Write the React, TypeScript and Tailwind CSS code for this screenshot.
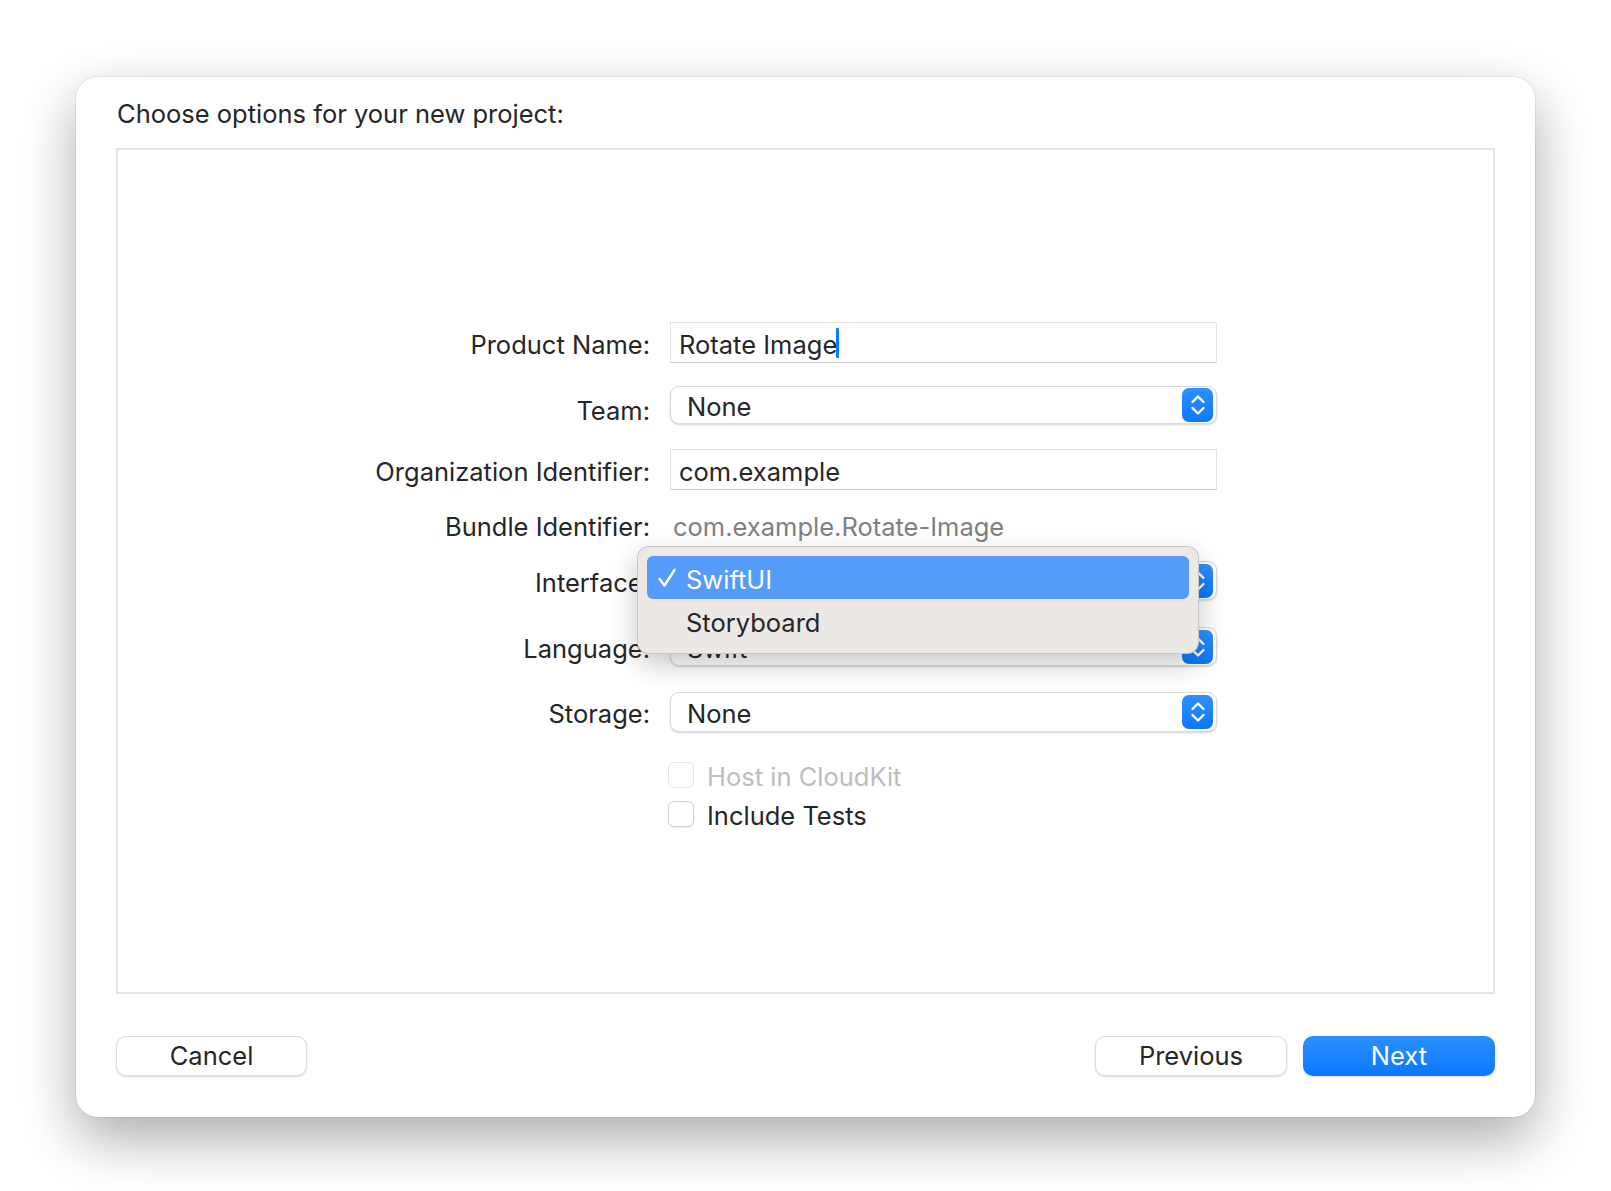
import React from "react";

const font = "font-['Inter','Noto_Sans',sans-serif]";
const nudge = "pt-[4px]";

function Stepper() {
  return (
    <div className="flex h-[34px] w-[31px] items-center justify-center rounded-[7px] bg-linear-to-b from-[#2e91fe] to-[#0a78fe]">
      <svg width="16" height="24" viewBox="0 0 16 24" fill="none" stroke="white" strokeWidth="2.4" strokeLinecap="round" strokeLinejoin="round">
        <path d="M2.5 9 L8 3.5 L13.5 9" />
        <path d="M2.5 15 L8 20.5 L13.5 15" />
      </svg>
    </div>
  );
}

function Popup({ value }: { value: string }) {
  return (
    <div className="flex h-full w-[547px] items-center justify-between rounded-[9px] border border-[#dadada] bg-white pl-[16px] pr-[3px] shadow-[0_1px_2px_rgba(0,0,0,0.18)]">
      <span className={nudge}>{value}</span>
      <Stepper />
    </div>
  );
}

function Field({ children }: { children: React.ReactNode }) {
  return (
    <div className="flex h-full w-[547px] items-center border border-[#e3e3e3] border-b-[#c9c9c9] bg-white pl-[8px]">
      {children}
    </div>
  );
}

function Row({ label, className, labelClass, children }: { label: string; className: string; labelClass?: string; children: React.ReactNode }) {
  return (
    <div className={`flex ${className}`}>
      <div className={`flex w-[532px] items-center justify-end ${labelClass ?? nudge}`}>{label}</div>
      <div className="relative ml-[20px] h-full">{children}</div>
    </div>
  );
}

function Checkbox({ label, disabled }: { label: string; disabled?: boolean }) {
  return (
    <div className="flex h-[26px] items-center">
      <div
        className={`h-[26px] w-[26px] rounded-[6px] border bg-white ${
          disabled ? "border-[#e6e6e6]" : "border-[#cfcfcf] shadow-[0_1px_1px_rgba(0,0,0,0.08)]"
        }`}
      />
      <span className={`ml-[13px] ${nudge} ${disabled ? "text-[#bdbdbd]" : "text-[#262626]"}`}>{label}</span>
    </div>
  );
}

function MenuCheck() {
  return (
    <svg width="20" height="20" viewBox="0 0 20 20" fill="none" stroke="white" strokeWidth="2.4" strokeLinecap="round" strokeLinejoin="round">
      <path d="M2.5 11 L7.5 17.5 L17.5 2" />
    </svg>
  );
}

export default function App() {
  return (
    <div className={`flex min-h-[1191px] w-full justify-center bg-white pt-[77px] ${font} text-[25.5px] leading-[32px] text-[#262626]`}>
      <div className="flex h-[1040px] w-[1459px] flex-col rounded-[22px] bg-white px-[40px] pt-[21px] shadow-[0_22px_55px_rgba(0,0,0,0.33),0_0_0_1px_rgba(0,0,0,0.06)]">
        <h1 className="ml-[1px]">Choose options for your new project:</h1>

        <div className="mt-[18px] h-[846px] w-full border-2 border-[#e4e4e4] pt-[172px]">
          <Row label="Product Name:" className="h-[41px]">
            <Field>
              <span className={nudge}>Rotate Image</span>
              <span className="ml-[-1px] h-[30px] w-[3px] rounded-[1px] bg-[#0a7aff]" />
            </Field>
          </Row>

          <Row label="Team:" className="mt-[23px] h-[38px]" labelClass="pt-[12px]">
            <Popup value="None" />
          </Row>

          <Row label="Organization Identifier:" className="mt-[25px] h-[41px]">
            <Field>
              <span className={nudge}>com.example</span>
            </Field>
          </Row>

          <Row label="Bundle Identifier:" className="mt-[20px] h-[30px]">
            <div className={`flex h-full items-center pl-[3px] text-[#808080] ${nudge}`}>com.example.Rotate-Image</div>
          </Row>

          <Row label="Interface:" className="mt-[21px] h-[39px]">
            <Popup value="SwiftUI" />
            <div className="absolute left-[-33px] top-[-15px] z-10 flex h-[108px] w-[562px] flex-col rounded-[12px] border border-black/15 bg-[#ece8e5] px-[9px] pt-[9px] shadow-[0_10px_28px_rgba(0,0,0,0.22)]">
              <div className="flex h-[43px] items-center rounded-[6px] bg-[#559cfa] pl-[10px] text-white">
                <MenuCheck />
                <span className={`ml-[9px] ${nudge}`}>SwiftUI</span>
              </div>
              <div className={`flex h-[44px] items-center pl-[39px] text-[#262626] ${nudge}`}>Storyboard</div>
            </div>
          </Row>

          <Row label="Language:" className="mt-[27px] h-[39px]">
            <Popup value="Swift" />
          </Row>

          <Row label="Storage:" className="mt-[26px] h-[40px]">
            <Popup value="None" />
          </Row>

          <div className="ml-[550px] mt-[30px] flex flex-col gap-[13px]">
            <Checkbox label="Host in CloudKit" disabled />
            <Checkbox label="Include Tests" />
          </div>
        </div>

        <div className="mt-[42px] flex items-center">
          <button className="h-[40px] w-[191px] rounded-[10px] border border-[#dcdcdc] bg-white shadow-[0_1px_2px_rgba(0,0,0,0.15)]">
            Cancel
          </button>
          <div className="flex-1" />
          <button className="h-[40px] w-[192px] rounded-[10px] border border-[#dcdcdc] bg-white shadow-[0_1px_2px_rgba(0,0,0,0.15)]">
            Previous
          </button>
          <button className="ml-[16px] h-[40px] w-[192px] rounded-[10px] bg-linear-to-b from-[#2a8ffe] to-[#0878fe] text-white shadow-[0_1px_2px_rgba(0,0,0,0.12)]">
            Next
          </button>
        </div>
      </div>
    </div>
  );
}
